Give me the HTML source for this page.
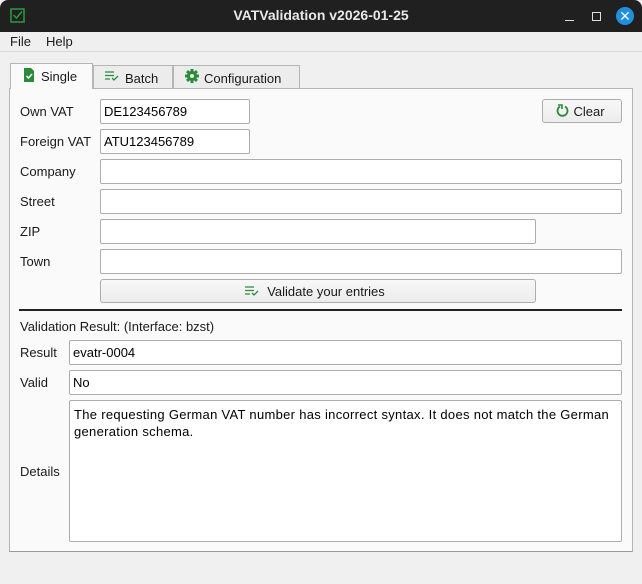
<!DOCTYPE html>
<html><head><style>
*{box-sizing:border-box;margin:0;padding:0}
body{width:642px;height:584px;background:#f0f0f0;font-family:"Liberation Sans","DejaVu Sans",sans-serif;font-size:13px;color:#1a1a1a;position:relative;overflow:hidden}
.a{position:absolute}
.in{position:absolute;background:#fff;border:1px solid #adadad;border-radius:2px;height:25px;padding:4px 0 0 3px;font-size:13px;color:#000}
.lb{position:absolute;font-size:13px}
.btn{position:absolute;background:linear-gradient(#f8f8f8,#ececec);border:1px solid #adadad;border-radius:3px;height:24px;text-align:center;padding-top:4px;font-size:13px}
.tab{position:absolute;border:1px solid #b5b5b5;border-bottom:none;background:#ececec;font-size:13px;padding-top:5px}
</style></head><body>
<div class="a" style="left:0;top:0;width:642px;height:32px;background:#202020;border-radius:8px 8px 0 0"></div>
<svg class="a" style="left:10px;top:8px" width="15" height="15"><rect x="1" y="1" width="13" height="13" fill="none" stroke="#2a9a3a" stroke-width="1.5"/><path d="M3.5 7 L6.5 10 L12 3.5" fill="none" stroke="#2a9a3a" stroke-width="1.5"/></svg>
<div class="a" style="left:0;width:642px;top:7px;text-align:center;color:#e8e8e8;font-weight:bold;font-size:14px">VATValidation v2026-01-25</div>
<div class="a" style="left:565px;top:20px;width:9px;height:1px;background:#ddd"></div>
<div class="a" style="left:592px;top:12px;width:9px;height:9px;border:1px solid #ddd"></div>
<div class="a" style="left:616px;top:7px;width:18px;height:18px;border-radius:50%;background:#1e90e0;color:#fff;text-align:center;font-size:14px;line-height:18px">✕</div>
<div class="a" style="left:0;top:32px;width:642px;height:20px;background:#efefef;border-bottom:1px solid #d8d8d8"></div>
<div class="lb" style="left:10px;top:34px">File</div>
<div class="lb" style="left:46px;top:34px">Help</div>
<div class="a" style="left:9px;top:88px;width:624px;height:464px;background:#fafafa;border:1px solid #b5b5b5;border-bottom-color:#999"></div>
<div class="tab" style="left:10px;top:63px;width:83px;height:26px;background:#fafafa;padding-left:30px">Single</div>
<svg class="a" style="left:23px;top:68px" width="12" height="14"><path d="M1 0H8L11 3V14H1Z" fill="#2a8a3a"/><path d="M3.5 8L5.5 10L9 6" stroke="#fff" stroke-width="1.5" fill="none"/></svg>
<div class="tab" style="left:93px;top:65px;width:80px;height:23px;padding-left:31px">Batch</div>
<svg class="a" style="left:105px;top:71px" width="14" height="10"><path d="M0 1H9M0 4.5H9M0 8H5M7 7L9 9L13 5" stroke="#2a8a3a" stroke-width="1.3" fill="none"/></svg>
<div class="tab" style="left:173px;top:65px;width:127px;height:23px;padding-left:30px">Configuration</div>
<svg class="a" style="left:185px;top:69px" width="14" height="14" viewBox="0 0 14 14"><g fill="#2a8a3a"><circle cx="7" cy="7" r="5"/><rect x="5.5" y="0" width="3" height="14"/><rect x="0" y="5.5" width="14" height="3"/><rect x="5.5" y="0" width="3" height="14" transform="rotate(45 7 7)"/><rect x="5.5" y="0" width="3" height="14" transform="rotate(-45 7 7)"/></g><circle cx="7" cy="7" r="2" fill="#ececec"/></svg>
<div class="lb" style="left:20px;top:104px">Own VAT</div>
<div class="in" style="left:100px;top:99px;width:150px">DE123456789</div>
<div class="lb" style="left:20px;top:134px">Foreign VAT</div>
<div class="in" style="left:100px;top:129px;width:150px">ATU123456789</div>
<div class="btn" style="left:542px;top:99px;width:80px;padding-left:14px">Clear</div>
<svg class="a" style="left:556px;top:104px" width="13" height="13"><path d="M4 2.5A5 5 0 1 0 9 2.5" stroke="#2a8a3a" stroke-width="1.8" fill="none"/><path d="M2 1H6V5" stroke="#2a8a3a" stroke-width="1.6" fill="none"/></svg>
<div class="lb" style="left:20px;top:164px">Company</div>
<div class="in" style="left:100px;top:159px;width:522px"></div>
<div class="lb" style="left:20px;top:194px">Street</div>
<div class="in" style="left:100px;top:189px;width:522px"></div>
<div class="lb" style="left:20px;top:224px">ZIP</div>
<div class="in" style="left:100px;top:219px;width:436px"></div>
<div class="lb" style="left:20px;top:254px">Town</div>
<div class="in" style="left:100px;top:249px;width:522px"></div>
<div class="btn" style="left:100px;top:279px;width:436px;padding-left:16px">Validate your entries</div>
<svg class="a" style="left:245px;top:286px" width="14" height="10"><path d="M0 1H9M0 4.5H9M0 8H5M7 7L9 9L13 5" stroke="#2a8a3a" stroke-width="1.3" fill="none"/></svg>
<div class="a" style="left:19px;top:309px;width:603px;height:2px;background:#222"></div>
<div class="lb" style="left:20px;top:319px">Validation Result: (Interface: bzst)</div>
<div class="lb" style="left:20px;top:345px">Result</div>
<div class="in" style="left:69px;top:340px;width:553px">evatr-0004</div>
<div class="lb" style="left:20px;top:375px">Valid</div>
<div class="in" style="left:69px;top:370px;width:553px">No</div>
<div class="lb" style="left:20px;top:464px">Details</div>
<div class="in" style="left:69px;top:400px;width:553px;height:142px;padding:5px 4px;line-height:17px;letter-spacing:0.3px">The requesting German VAT number has incorrect syntax. It does not match the German generation schema.</div>
</body></html>
